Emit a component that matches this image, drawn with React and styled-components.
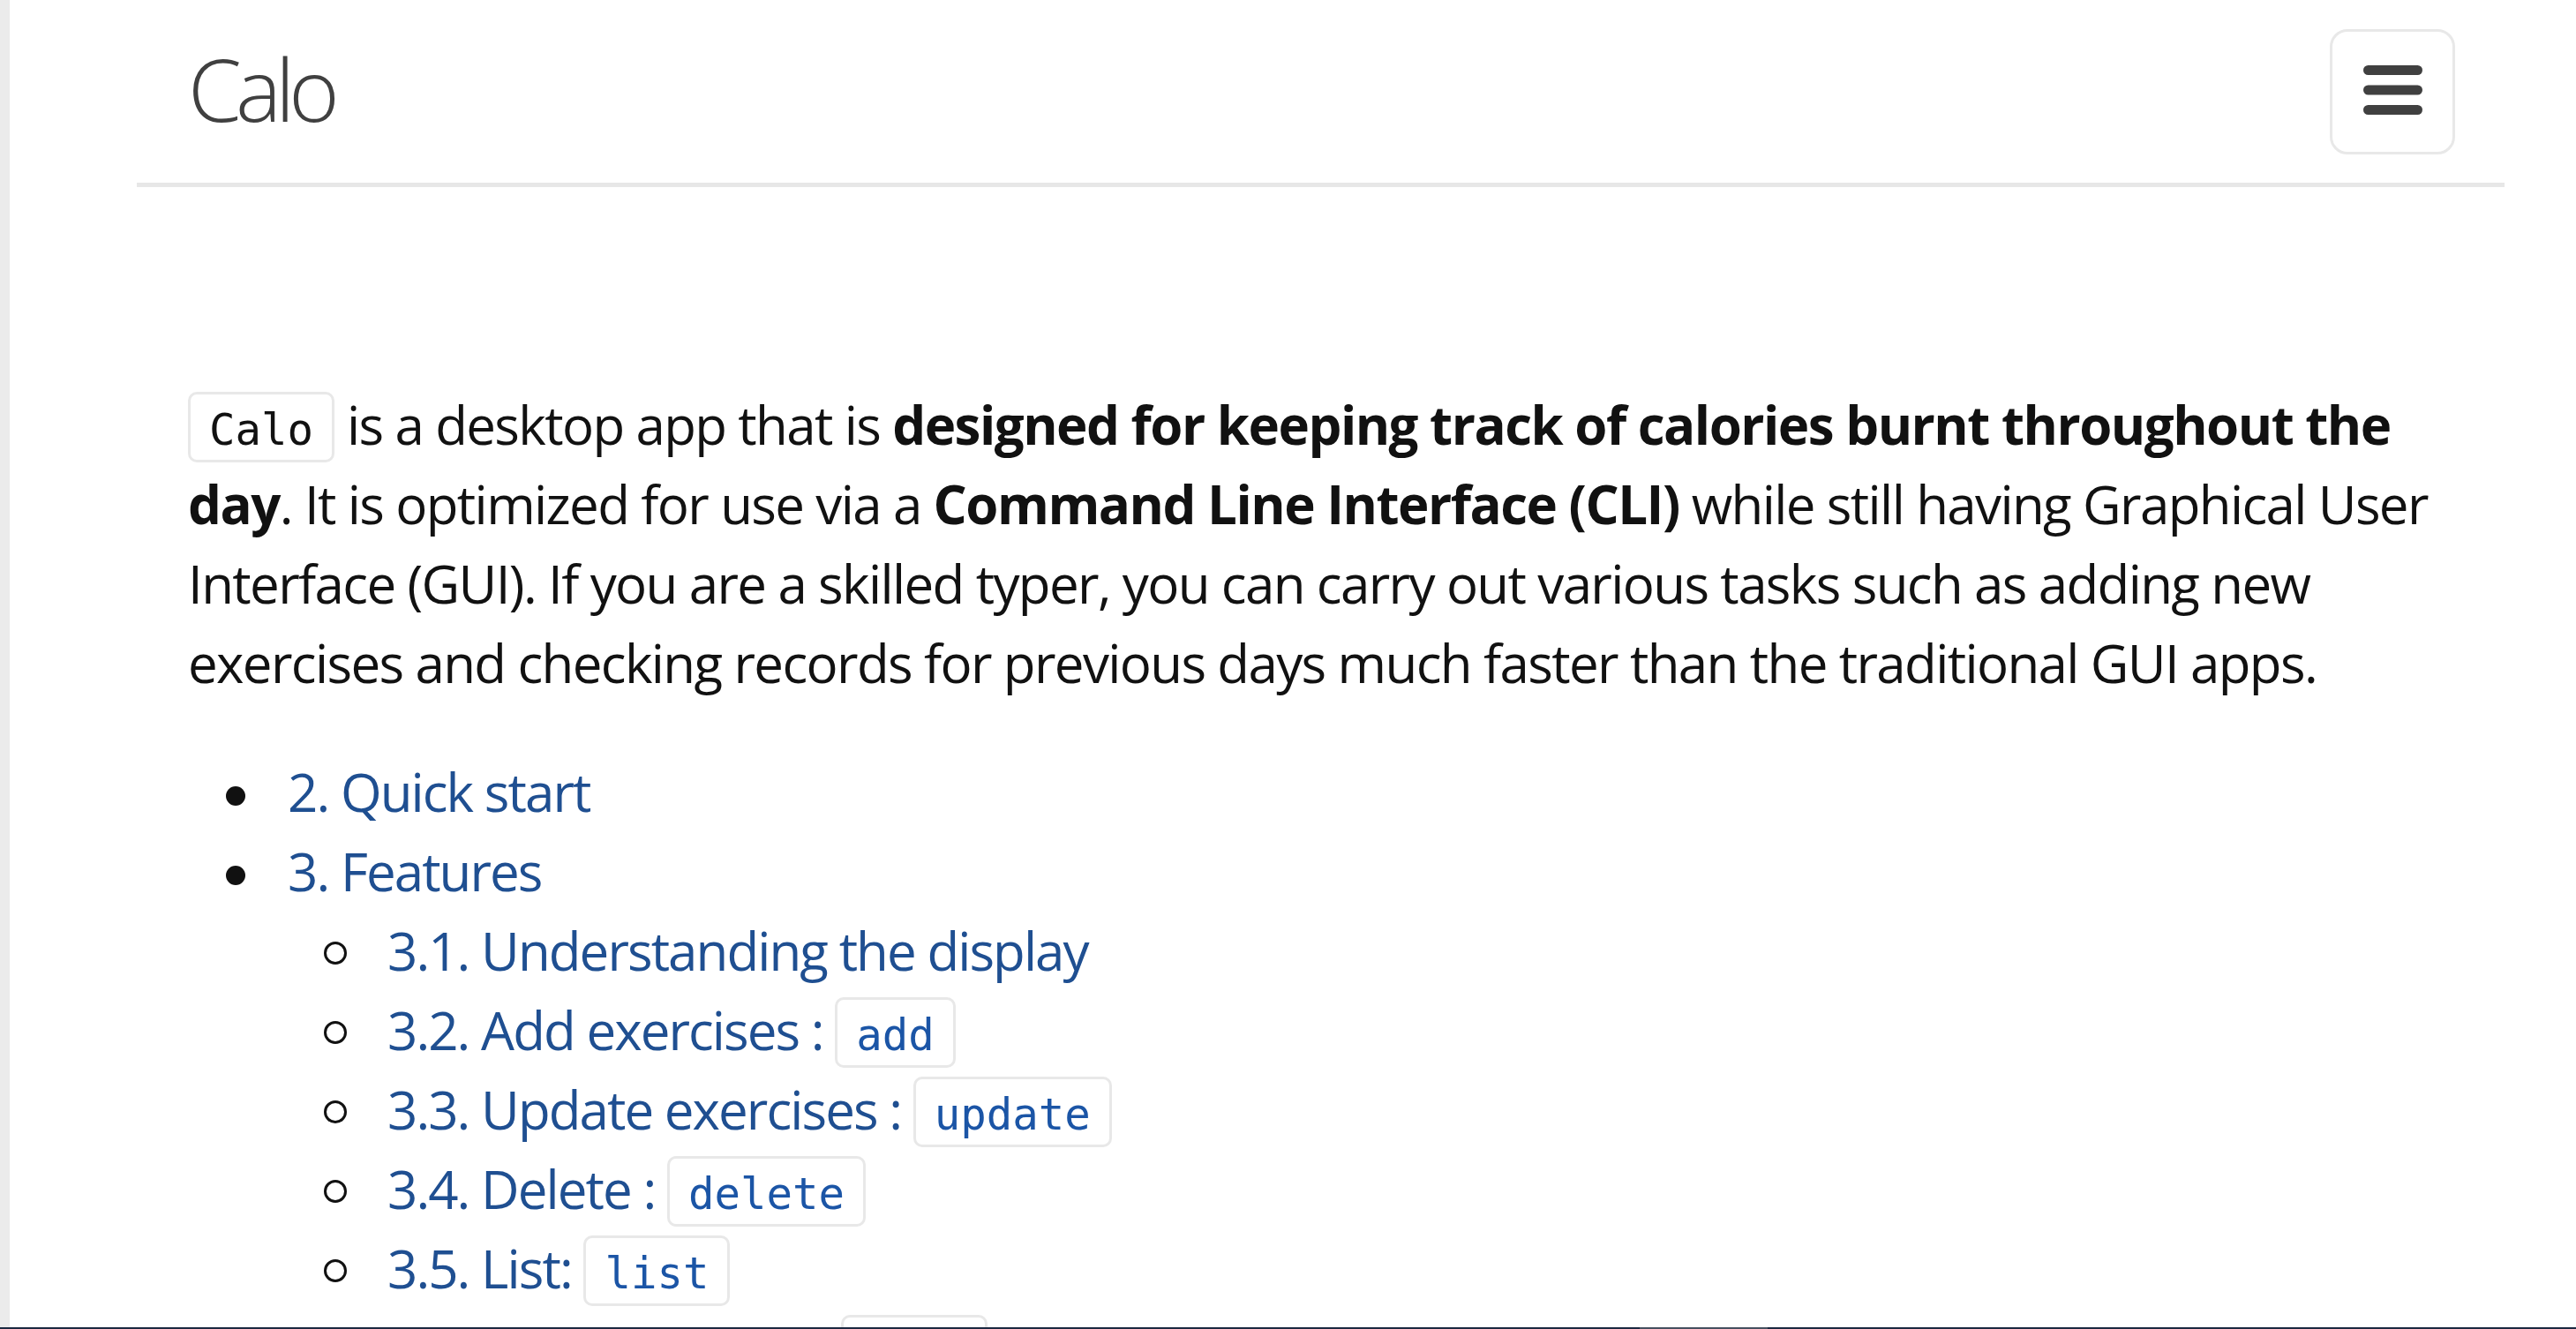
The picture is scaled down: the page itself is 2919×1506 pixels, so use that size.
import React from "react";
import styled, { createGlobalStyle } from "styled-components";

const GlobalStyle = createGlobalStyle`
  html, body {
    margin: 0;
    height: 100%;
    overflow: hidden;
    background: #ffffff;
  }
  body {
    font-family: "Open Sans", "Noto Sans", sans-serif;
  }
`;

const Page = styled.div`
  display: flex;
  min-height: 100vh;
`;

const Edge = styled.div`
  width: 11px;
  flex-shrink: 0;
  background: #ebebeb;
`;

const Main = styled.main`
  flex: 1;
  min-width: 0;
  margin: 0 81px 0 144px;
`;

const Header = styled.header`
  display: flex;
  align-items: center;
  justify-content: space-between;
  height: 207px;
  padding: 0 56px 0 58px;
  border-bottom: 5px solid #e7e7e7;
`;

const Brand = styled.a`
  font-size: 98px;
  font-weight: 300;
  line-height: 1;
  letter-spacing: -0.07em;
  color: #404040;
  text-decoration: none;
  margin-bottom: 8px;
`;

const MenuButton = styled.button`
  display: flex;
  align-items: center;
  justify-content: center;
  width: 142px;
  height: 142px;
  padding: 0 0 4px;
  background: #ffffff;
  border: 3px solid #e8e8e8;
  border-radius: 20px;
`;

const Content = styled.div`
  padding: 224px 30px 0 58px;
  font-size: 60px;
  line-height: 90px;
  color: #111111;
  letter-spacing: -0.027em;

  strong {
    letter-spacing: -0.025em;
  }
`;

const Lead = styled.p`
  margin: 0 0 56px;
`;

const Code = styled.code`
  font-family: "DejaVu Sans Mono", "Liberation Mono", monospace;
  font-size: 49px;
  line-height: 1;
  letter-spacing: 0;
  padding: 12px 21px 5px;
  border: 3px solid #e8e8e8;
  border-radius: 10px;
  background: #ffffff;
  color: inherit;
`;

const Toc = styled.ul`
  margin: 0;
  padding-left: 113px;
  list-style: none;
`;

const Item = styled.li`
  &::before {
    content: "";
    display: inline-block;
    box-sizing: border-box;
    width: ${(p) => (p.$sub ? "26px" : "22px")};
    height: ${(p) => (p.$sub ? "26px" : "22px")};
    margin: 0 ${(p) => (p.$sub ? "46px" : "48px")} 7px ${(p) => (p.$sub ? "-72px" : "-70px")};
    border-radius: 50%;
    background: ${(p) => (p.$sub ? "transparent" : "#111111")};
    border: ${(p) => (p.$sub ? "3.5px solid #111111" : "none")};
  }
`;

const Link = styled.a`
  color: #1f4f91;
  text-decoration: none;
  letter-spacing: -0.032em;

  ${Code} {
    color: #1b55a6;
  }
`;

const BottomEdge = styled.div`
  position: fixed;
  left: 0;
  right: 0;
  bottom: 0;
  height: 2px;
  background: #1b2840;
`;

const BottomThumb = styled.div`
  margin-left: 1858px;
  width: 145px;
  height: 100%;
  background: #46505f;
`;

const MenuIcon = () => (
  <svg width="67" height="56" viewBox="0 0 67 56">
    <rect x="0" y="0" width="67" height="11" rx="5.5" fill="#404040" />
    <rect x="0" y="22.5" width="67" height="11" rx="5.5" fill="#404040" />
    <rect x="0" y="45" width="67" height="11" rx="5.5" fill="#404040" />
  </svg>
);

const features = [
  { label: "3.1. Understanding the display" },
  { label: "3.2. Add exercises : ", cmd: "add" },
  { label: "3.3. Update exercises : ", cmd: "update" },
  { label: "3.4. Delete : ", cmd: "delete" },
  { label: "3.5. List: ", cmd: "list" },
  { label: "3.6. Find exercises : ", cmd: "find" },
];

export default function App() {
  return (
    <>
      <GlobalStyle />
      <Page>
        <Edge />
        <Main>
          <Header>
            <Brand href="#">Calo</Brand>
            <MenuButton aria-label="Menu">
              <MenuIcon />
            </MenuButton>
          </Header>
          <Content>
            <Lead>
              <Code>Calo</Code> is a desktop app that is{" "}
              <strong>designed for keeping track of calories burnt throughout the day</strong>. It is
              optimized for use via a <strong>Command Line Interface (CLI)</strong> while still having
              Graphical User Interface (GUI). If you are a skilled typer, you can carry out various
              tasks such as adding new exercises and checking records for previous days much faster
              than the traditional GUI apps.
            </Lead>
            <Toc>
              <Item>
                <Link href="#">2. Quick start</Link>
              </Item>
              <Item>
                <Link href="#">3. Features</Link>
                <Toc>
                  {features.map((f) => (
                    <Item key={f.label} $sub>
                      <Link href="#">
                        {f.label}
                        {f.cmd && <Code>{f.cmd}</Code>}
                      </Link>
                    </Item>
                  ))}
                </Toc>
              </Item>
            </Toc>
          </Content>
        </Main>
      </Page>
      <BottomEdge>
        <BottomThumb />
      </BottomEdge>
    </>
  );
}
